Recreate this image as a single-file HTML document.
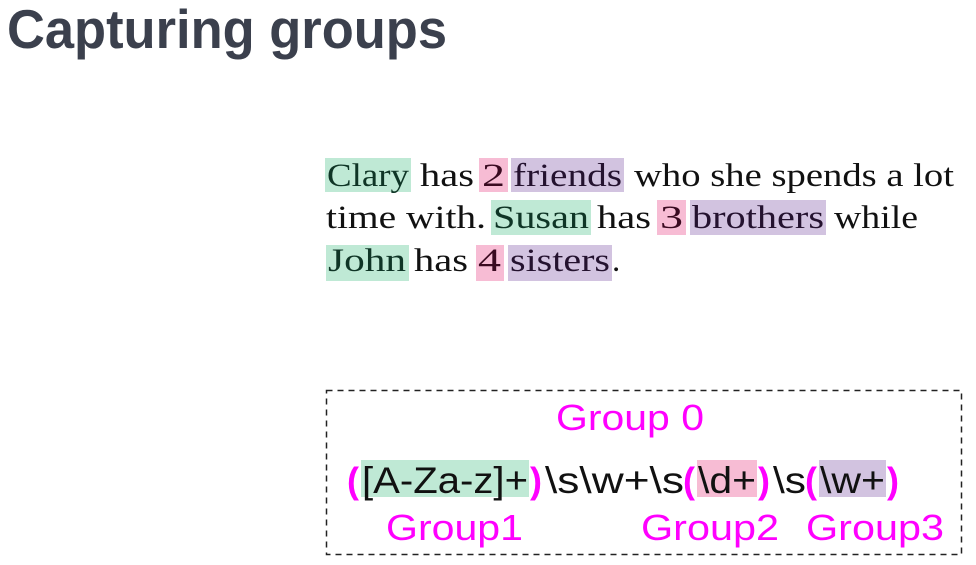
<!DOCTYPE html>
<html><head><meta charset="utf-8"><style>
html,body{margin:0;padding:0;background:#fff;width:976px;height:565px;overflow:hidden}
svg{display:block}
.t{font-family:"Liberation Serif",serif;font-size:33px;fill:#111}
.r{font-family:"Liberation Sans",sans-serif;font-size:37px;fill:#111}
.m{font-family:"Liberation Sans",sans-serif;font-size:36px;fill:#ff00ff}
</style></head><body>
<svg width="976" height="565" viewBox="0 0 976 565" xmlns="http://www.w3.org/2000/svg">
<text x="7" y="48" font-family="Liberation Sans, sans-serif" font-weight="bold" font-size="55" fill="#3b404d" textLength="440" lengthAdjust="spacingAndGlyphs">Capturing groups</text>

<rect x="325" y="158" width="86" height="34" fill="#bfe9d5"/>
<rect x="479" y="158" width="29" height="34" fill="#f7bcd4"/>
<rect x="511" y="158" width="113" height="34" fill="#d2c3e0"/>
<rect x="491" y="200" width="100" height="35" fill="#bfe9d5"/>
<rect x="657" y="200" width="29" height="35" fill="#f7bcd4"/>
<rect x="690" y="200" width="136" height="35" fill="#d2c3e0"/>
<rect x="326" y="245" width="83" height="36" fill="#bfe9d5"/>
<rect x="476" y="245" width="28" height="36" fill="#f7bcd4"/>
<rect x="508" y="245" width="104" height="36" fill="#d2c3e0"/>

<g class="t">
<text x="327" y="186" textLength="82" lengthAdjust="spacingAndGlyphs" fill="#0f3526">Clary</text>
<text x="420" y="186" textLength="54" lengthAdjust="spacingAndGlyphs">has</text>
<text x="482" y="186" textLength="23" lengthAdjust="spacingAndGlyphs" fill="#3a0a20">2</text>
<text x="513" y="186" textLength="109" lengthAdjust="spacingAndGlyphs" fill="#24122f">friends</text>
<text x="634" y="186" textLength="320" lengthAdjust="spacingAndGlyphs">who she spends a lot</text>

<text x="326" y="228" textLength="160" lengthAdjust="spacingAndGlyphs">time with.</text>
<text x="493" y="228" textLength="96" lengthAdjust="spacingAndGlyphs" fill="#0f3526">Susan</text>
<text x="597" y="228" textLength="54" lengthAdjust="spacingAndGlyphs">has</text>
<text x="660" y="228" textLength="23" lengthAdjust="spacingAndGlyphs" fill="#3a0a20">3</text>
<text x="692" y="228" textLength="132" lengthAdjust="spacingAndGlyphs" fill="#24122f">brothers</text>
<text x="834" y="228" textLength="84" lengthAdjust="spacingAndGlyphs">while</text>

<text x="328" y="271" textLength="78" lengthAdjust="spacingAndGlyphs" fill="#0f3526">John</text>
<text x="414" y="271" textLength="54" lengthAdjust="spacingAndGlyphs">has</text>
<text x="478" y="271" textLength="23" lengthAdjust="spacingAndGlyphs" fill="#3a0a20">4</text>
<text x="510" y="271" textLength="100" lengthAdjust="spacingAndGlyphs" fill="#24122f">sisters</text>
<text x="612" y="271">.</text>
</g>

<rect x="326.5" y="390.5" width="635" height="164" fill="none" stroke="#222" stroke-width="1.5" stroke-dasharray="6,5"/>
<text class="m" x="556" y="430" textLength="148" lengthAdjust="spacingAndGlyphs">Group 0</text>

<rect x="361" y="460" width="168" height="37" fill="#bfe9d5"/>
<rect x="697" y="460" width="60" height="37" fill="#f7bcd4"/>
<rect x="819" y="460" width="67" height="37" fill="#d2c3e0"/>

<text class="m" x="347" y="493" font-weight="bold">(</text>
<text class="r" x="362" y="493" textLength="166" lengthAdjust="spacingAndGlyphs" fill="#0f3526">[A-Za-z]+</text>
<text class="m" x="530" y="493" font-weight="bold">)</text>
<text class="r" x="545" y="493" textLength="139" lengthAdjust="spacingAndGlyphs">\s\w+\s</text>
<text class="m" x="683" y="493" font-weight="bold">(</text>
<text class="r" x="698" y="493" textLength="58" lengthAdjust="spacingAndGlyphs" fill="#3a0a20">\d+</text>
<text class="m" x="758" y="493" font-weight="bold">)</text>
<text class="r" x="773" y="493" textLength="33" lengthAdjust="spacingAndGlyphs">\s</text>
<text class="m" x="805" y="493" font-weight="bold">(</text>
<text class="r" x="820" y="493" textLength="65" lengthAdjust="spacingAndGlyphs" fill="#24122f">\w+</text>
<text class="m" x="887" y="493" font-weight="bold">)</text>

<text class="m" x="386" y="540" textLength="137" lengthAdjust="spacingAndGlyphs">Group1</text>
<text class="m" x="641" y="540" textLength="138" lengthAdjust="spacingAndGlyphs">Group2</text>
<text class="m" x="806" y="540" textLength="138" lengthAdjust="spacingAndGlyphs">Group3</text>
</svg>
</body></html>
